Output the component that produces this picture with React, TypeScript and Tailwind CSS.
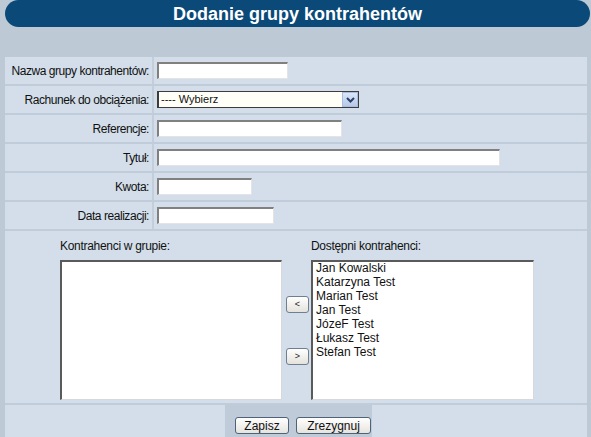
import React from "react";

const inputCls =
  "h-[17px] bg-white border-t-2 border-l-2 border-r border-b border-t-[#808080] border-l-[#808080] border-r-[#e4e4e4] border-b-[#e4e4e4]";

function Row({ label, children }: { label: string; children: React.ReactNode }) {
  return (
    <div className="flex h-[29px] border-b-2 border-b-[#c0ccd9]">
      <div className="w-[149px] shrink-0 border-r-2 border-r-[#c3cedb] flex items-center justify-end pr-[3px] text-[12px] text-[#111] whitespace-nowrap tracking-[-0.45px]">
        {label}
      </div>
      <div className="flex items-center pl-[3px]">{children}</div>
    </div>
  );
}

function SmallBtn({ label }: { label: string }) {
  return (
    <div className="w-[23px] h-[17px] rounded-[3px] border border-[#6f7f90] bg-gradient-to-b from-[#ffffff] to-[#e4e2dc] flex items-center justify-center text-[9px] text-[#222] leading-none">
      {label}
    </div>
  );
}

export default function App() {
  const available = ["Jan Kowalski", "Katarzyna Test", "Marian Test", "Jan Test", "JózeF Test", "Łukasz Test", "Stefan Test"];
  return (
    <div
      className="w-[591px] h-[437px] overflow-hidden bg-[#bdcad6] text-[12px]"
      style={{ fontFamily: '"Liberation Sans", Arial, sans-serif' }}
    >
      <div className="ml-[5px] w-[585px] h-[27px] rounded-full bg-[#0b4a78] flex items-center justify-center">
        <span className="text-white font-bold text-[18px] leading-none">Dodanie grupy kontrahentów</span>
      </div>
      <div className="h-[30px]" />
      <div className="ml-[5px] w-[582px] bg-[#d3deea]">
        <Row label="Nazwa grupy kontrahentów:">
          <div className={`${inputCls} w-[131px]`} />
        </Row>
        <Row label="Rachunek do obciążenia:">
          <div className="relative w-[202px] h-[17px] bg-[#fffff8] border border-[#3c3c3c] border-l-2 flex items-center">
            <span className="pl-[2px] text-[11px] text-[#111] leading-none">---- Wybierz</span>
            <div className="absolute right-0 top-0 w-[16px] h-[15px] bg-gradient-to-b from-[#dbe6f7] to-[#b6c9ea] border border-[#a9bde0] flex items-center justify-center">
              <svg width="9" height="6" viewBox="0 0 9 6">
                <path d="M1 1 L4.5 4.5 L8 1" fill="none" stroke="#2c3f6b" strokeWidth="2" />
              </svg>
            </div>
          </div>
        </Row>
        <Row label="Referencje:">
          <div className={`${inputCls} w-[185px]`} />
        </Row>
        <Row label="Tytuł:">
          <div className={`${inputCls} w-[343px]`} />
        </Row>
        <Row label="Kwota:">
          <div className={`${inputCls} w-[95px]`} />
        </Row>
        <Row label="Data realizacji:">
          <div className={`${inputCls} w-[117px]`} />
        </Row>
        <div className="h-[174px] border-b-2 border-b-[#c0ccd9] flex pl-[55px] pt-[8px]">
          <div className="flex flex-col w-[222px]">
            <div className="h-[21px] text-[12px] text-[#111] leading-[14px] tracking-[-0.3px]">Kontrahenci w grupie:</div>
            <div className="w-[222px] h-[140px] bg-white border-t-2 border-l-2 border-r border-b border-t-[#5a5a5a] border-l-[#5a5a5a] border-r-[#d8d8d8] border-b-[#d8d8d8]" />
          </div>
          <div className="flex flex-col w-[23px] ml-[4px] pt-[57px]">
            <SmallBtn label="<" />
            <div className="h-[35px]" />
            <SmallBtn label=">" />
          </div>
          <div className="flex flex-col w-[223px] ml-[2px]">
            <div className="h-[21px] text-[12px] text-[#111] leading-[14px] tracking-[-0.3px]">Dostępni kontrahenci:</div>
            <div className="w-[223px] h-[140px] bg-white border-t-2 border-l-2 border-r border-b border-t-[#5a5a5a] border-l-[#5a5a5a] border-r-[#d8d8d8] border-b-[#d8d8d8] pl-[3px]">
              {available.map((n, i) => (
                <div key={n} className={`h-[14px] leading-[14px] text-[12px] text-[#111] ${i === 0 ? "-mt-[1px]" : ""}`}>
                  {n}
                </div>
              ))}
            </div>
          </div>
        </div>
        <div className="h-[32px] flex">
          <div className="w-[220px]" />
          <div className="w-[147px] bg-[#bfcbd8] flex items-start pt-[12px] pl-[10px] gap-[7px]">
            <div className="w-[54px] h-[17px] rounded-[3px] border border-[#4f6278] bg-gradient-to-b from-[#ffffff] to-[#e6e4de] flex items-center justify-center text-[12px] text-[#111] leading-none">
              Zapisz
            </div>
            <div className="w-[75px] h-[17px] rounded-[3px] border border-[#4f6278] bg-gradient-to-b from-[#ffffff] to-[#e6e4de] flex items-center justify-center text-[12px] text-[#111] leading-none">
              Zrezygnuj
            </div>
          </div>
        </div>
      </div>
    </div>
  );
}
